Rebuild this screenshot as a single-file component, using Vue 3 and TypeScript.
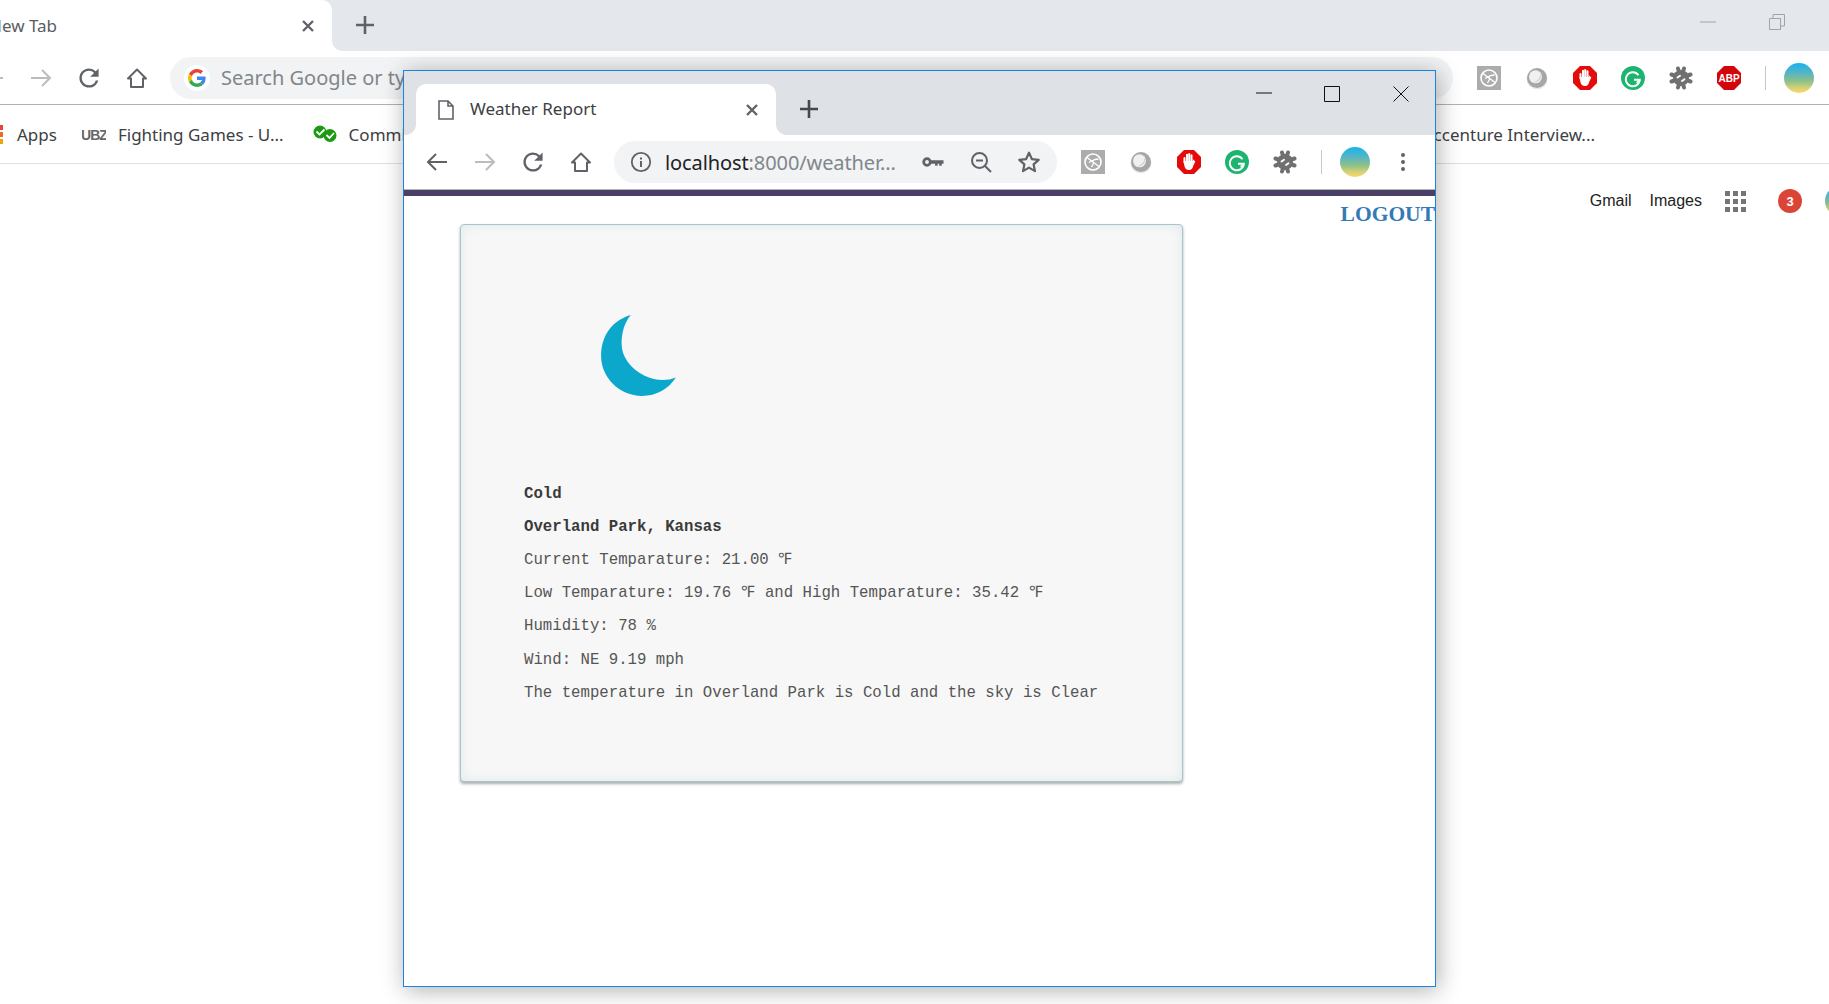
<template>
  <div class="desktop">
    <!-- shared icons -->
    <svg class="sprite" aria-hidden="true">
      <defs>
        <symbol id="back" viewBox="0 0 24 24"><path d="M22 12H3.500M11 4 3 12l8 8" fill="none" stroke="currentColor" stroke-width="2" /></symbol>
        <symbol id="forward" viewBox="0 0 24 24"><path d="M2 12h18.500M13 4l8 8-8 8" fill="none" stroke="currentColor" stroke-width="2" /></symbol>
        <symbol id="reload" viewBox="2 2 20 20"><path fill="currentColor" d="M17.650 6.350A7.960 7.960 0 0 0 12 4c-4.420 0-7.990 3.580-7.990 8s3.570 8 7.990 8c3.730 0 6.840-2.550 7.730-6h-2.080A5.990 5.990 0 0 1 12 18c-3.310 0-6-2.690-6-6s2.690-6 6-6c1.660 0 3.140.690 4.220 1.780L13 11h7V4l-2.350 2.350z" /></symbol>
        <symbol id="home" viewBox="0 0 24 24"><path d="M12 3.500 21 12.500h-3V21H6v-8.500H3z" fill="none" stroke="currentColor" stroke-width="2" stroke-linejoin="round" /></symbol>
        <symbol id="info" viewBox="0 0 24 24"><circle cx="12" cy="12" r="9.200" fill="none" stroke="currentColor" stroke-width="1.800" /><path d="M11 11h2v6h-2zM11 7.500h2v2h-2z" fill="currentColor" /></symbol>
        <symbol id="key" viewBox="0 0 24 24"><circle cx="6" cy="12" r="3.300" fill="none" stroke="currentColor" stroke-width="2.800" /><path d="M9 10.300h13.500v3.400h-1.800v2h-2.500v-2h-1.600v2h-2.500v-2H9z" fill="currentColor" /></symbol>
        <symbol id="zoomout" viewBox="0 0 24 24"><circle cx="10.500" cy="10.500" r="7.500" fill="none" stroke="currentColor" stroke-width="2" /><path d="M16 16l6 6M7 10.500h7" fill="none" stroke="currentColor" stroke-width="2" /></symbol>
        <symbol id="star" viewBox="1 1 22 22"><path d="m12 3.500 2.600 5.800 6.300.7-4.700 4.200 1.300 6.200-5.500-3.200-5.500 3.200 1.300-6.200L3.100 10l6.300-.7z" fill="none" stroke="currentColor" stroke-width="2" stroke-linejoin="round" /></symbol>
        <symbol id="page" viewBox="0 0 16 20"><path d="M1 1h9l5 5v13H1zM10 1v5h5" fill="#fff" stroke="#5f6368" stroke-width="1.600" /></symbol>
        <symbol id="ext-runner" viewBox="0 0 24 24">
          <rect width="24" height="24" fill="#acacac" />
          <circle cx="12" cy="12" r="8" fill="none" stroke="#fff" stroke-width="1.600" />
          <path d="M6 7.500 18 16.500M8 12.500l6-3 3.500-.5M12 10.500l.5 3-2 3.500" fill="none" stroke="#fff" stroke-width="1.300" />
        </symbol>
        <symbol id="ext-orb" viewBox="0 0 24 24">
          <circle cx="12" cy="12.800" r="10.500" fill="#e8e8e8" />
          <circle cx="12" cy="12" r="10" fill="#a6a6a6" />
          <circle cx="10.500" cy="10.800" r="6.500" fill="#f0f0f0" />
          <path d="M15.500 7.500a6.500 6.500 0 0 1-8 8.500 8 8 0 0 0 8-8.500z" fill="#c9c9c9" />
        </symbol>
        <symbol id="ext-stop" viewBox="0 0 24 24">
          <path d="M7 0h10l7 7v10l-7 7H7l-7-7V7z" fill="#e40b0b" />
          <path d="M7.500 12.500V8M10 11V4.800M12.200 11V4M14.500 11V5.200" stroke="#fff" stroke-width="2" stroke-linecap="round" />
          <path d="M6.600 11h9.100V9l2.600 2.500c-.6 2-1.800 3-2.300 5-.5 2.300-1.700 3.500-3.700 3.500-3 0-4.300-1.500-5-4.500z" fill="#fff" />
        </symbol>
        <symbol id="ext-gram" viewBox="0 0 24 24">
          <circle cx="12" cy="12" r="12" fill="#1cb46f" />
          <path d="M17.500 9.200A7 7 0 1 0 18.800 13.700H13" fill="none" stroke="#fff" stroke-width="1.900" />
          <path d="m15.500 16.800 3.600-3.100" stroke="#fff" stroke-width="1.500" />
        </symbol>
        <symbol id="ext-bug" viewBox="0 0 24 24">
          <g stroke="#707070" stroke-width="4" stroke-linecap="round">
            <path d="M9 2.500 15 21.500M15 2.500 9 21.500M2.500 8.500l19 7M21.500 8.500l-19 7" />
          </g>
          <circle cx="12" cy="12" r="8" fill="#707070" />
          <path d="M8.500 11.500l2.500-1.800M13 15l2.500-1.800" stroke="#fff" stroke-width="1.900" stroke-linecap="round" />
        </symbol>
        <symbol id="ext-abp" viewBox="0 0 24 24">
          <path d="M7 0h10l7 7v10l-7 7H7l-7-7V7z" fill="#d3050c" />
          <text x="12" y="16" text-anchor="middle" class="abp-text">ABP</text>
        </symbol>
        <symbol id="google-g" viewBox="0 0 48 48">
          <path fill="#EA4335" d="M24 9.500c3.540 0 6.710 1.220 9.210 3.600l6.850-6.850C35.900 2.380 30.470 0 24 0 14.620 0 6.510 5.380 2.560 13.220l7.980 6.190C12.430 13.720 17.740 9.500 24 9.500z" />
          <path fill="#4285F4" d="M46.980 24.550c0-1.570-.150-3.090-.380-4.550H24v9.020h12.940c-.580 2.960-2.260 5.480-4.780 7.180l7.730 6c4.510-4.180 7.090-10.360 7.090-17.650z" />
          <path fill="#FBBC05" d="M10.530 28.590c-.480-1.450-.760-2.990-.760-4.590s.270-3.140.760-4.590l-7.980-6.190C.920 16.460 0 20.120 0 24c0 3.880.920 7.540 2.560 10.780l7.970-6.190z" />
          <path fill="#34A853" d="M24 48c6.480 0 11.930-2.130 15.890-5.810l-7.730-6c-2.150 1.450-4.920 2.300-8.160 2.300-6.260 0-11.570-4.220-13.470-9.910l-7.980 6.190C6.510 42.620 14.620 48 24 48z" />
        </symbol>
      </defs>
    </svg>

    <!-- window in the back -->
    <div class="back-window">
      <div class="strip back-strip">
        <div class="tab back-tab">
          <span class="back-tab-title">New Tab</span>
          <svg class="tab-x" viewBox="0 0 12 12"><path d="M1 1l10 10M11 1 1 11" /></svg>
        </div>
        <svg class="plus back-plus" viewBox="0 0 18 18"><path d="M9 0v18M0 9h18" /></svg>
        <div class="win-controls back-controls">
          <div class="win-btn"><svg width="16" height="2"><path d="M0 1h16" stroke="#a0a4a8" /></svg></div>
          <div class="win-btn"><svg width="16" height="16"><path d="M.5 4.500h11v11H.5zM4 4.500V.5h11.500V12H12" fill="none" stroke="#a0a4a8" /></svg></div>
        </div>
      </div>

      <div class="toolbar back-toolbar">
        <svg class="tb-icon dim"><use href="#back" /></svg>
        <svg class="tb-icon dim"><use href="#forward" /></svg>
        <svg class="tb-icon"><use href="#reload" /></svg>
        <svg class="tb-icon"><use href="#home" /></svg>
        <div class="omnibox back-omnibox">
          <span class="g-chip"><svg width="18" height="18"><use href="#google-g" /></svg></span>
          <span class="omni-hint">Search Google or type a URL</span>
        </div>
        <div class="ext-list back-exts">
          <svg v-for="e in backExts" :key="e" class="ext"><use :href="`#${e}`" /></svg>
        </div>
        <div class="divider"></div>
        <div class="avatar"></div>
      </div>

      <div class="bookmarks">
        <div class="apps-grid"><i></i><i></i><i></i></div>
        <span class="bm apps">Apps</span>
        <svg class="bm-icon fg-icon" viewBox="0 0 24 16"><text x="12" y="13.500" text-anchor="middle" class="fg-text">UBZ</text></svg>
        <span class="bm">Fighting Games - U...</span>
        <svg class="bm-icon comm-icon" viewBox="0 0 24 18">
          <circle cx="7" cy="7" r="6.500" fill="#1c9a12" /><circle cx="17" cy="10.500" r="6.500" fill="#1c9a12" />
          <path d="M3.500 6.500l3 3 5-5M13.500 10l3 3 4.500-5" fill="none" stroke="#fff" stroke-width="1.800" />
        </svg>
        <span class="bm">Commits</span>
        <span class="bm last">Accenture Interview...</span>
      </div>

      <div class="google-links">
        <span class="g-link">Gmail</span>
        <span class="g-link images">Images</span>
        <div class="dots"><i v-for="n in 9" :key="n"></i></div>
        <span class="badge">3</span>
        <div class="avatar small"></div>
      </div>
    </div>

    <!-- window in front, free on the desktop -->
    <div class="front-window">
      <div class="strip front-strip">
        <div class="tab front-tab">
          <svg class="page-icon"><use href="#page" /></svg>
          <span class="tab-title">Weather Report</span>
          <svg class="tab-x" viewBox="0 0 12 12"><path d="M1 1l10 10M11 1 1 11" /></svg>
        </div>
        <svg class="plus front-plus" viewBox="0 0 18 18"><path d="M9 0v18M0 9h18" /></svg>
        <div class="win-controls front-controls">
          <div class="win-btn"><svg width="16" height="2"><path d="M0 1h16" stroke="#111" /></svg></div>
          <div class="win-btn"><svg width="16" height="16"><path d="M.5.5h15v15H.5z" fill="none" stroke="#111" /></svg></div>
          <div class="win-btn"><svg width="16" height="16"><path d="M.5.5l15 15M15.500.5l-15 15" fill="none" stroke="#111" /></svg></div>
        </div>
      </div>

      <div class="toolbar front-toolbar">
        <svg class="tb-icon"><use href="#back" /></svg>
        <svg class="tb-icon dim"><use href="#forward" /></svg>
        <svg class="tb-icon"><use href="#reload" /></svg>
        <svg class="tb-icon"><use href="#home" /></svg>
        <div class="omnibox front-omnibox">
          <svg class="info"><use href="#info" /></svg>
          <span class="url">localhost<span class="url-rest">:8000/weather...</span></span>
          <div class="omni-actions">
            <svg class="tb-icon"><use href="#key" /></svg>
            <svg class="tb-icon"><use href="#zoomout" /></svg>
            <svg class="tb-icon"><use href="#star" /></svg>
          </div>
        </div>
        <div class="ext-list front-exts">
          <svg v-for="e in frontExts" :key="e" class="ext"><use :href="`#${e}`" /></svg>
        </div>
        <div class="divider"></div>
        <div class="avatar"></div>
        <svg class="menu" viewBox="0 0 4 18"><circle cx="2" cy="2" r="2" /><circle cx="2" cy="9" r="2" /><circle cx="2" cy="16" r="2" /></svg>
      </div>

      <div class="app-nav"></div>
      <div class="logout-row"><a class="logout">LOGOUT</a></div>

      <div class="weather-card">
        <svg class="moon" viewBox="0 0 78 83">
          <path d="M31 2C13 7 2 22 2 42c0 21 18 39 40 39 14 0 26-7 33-18-10 4-20 3-31-2C30 54 22 42 22 30c0-11 3-21 9-28z" fill="#0ba8cc" />
        </svg>
        <p v-for="line in lines" :key="line.text" class="line" :class="{ strong: line.strong }">
          <template v-for="(part, i) in line.text.split('℉')" :key="i"><span v-if="i > 0" class="deg">℉</span>{{ part }}</template>
        </p>
      </div>
    </div>
  </div>
</template>

<script setup lang="ts">
const frontExts = ['ext-runner', 'ext-orb', 'ext-stop', 'ext-gram', 'ext-bug']
const backExts = [...frontExts, 'ext-abp']

interface Line {
  text: string
  strong?: boolean
}

const lines: Line[] = [
  { text: 'Cold', strong: true },
  { text: 'Overland Park, Kansas', strong: true },
  { text: 'Current Temparature: 21.00 ℉' },
  { text: 'Low Temparature: 19.76 ℉ and High Temparature: 35.42 ℉' },
  { text: 'Humidity: 78 %' },
  { text: 'Wind: NE 9.19 mph' },
  { text: 'The temperature in Overland Park is Cold and the sky is Clear' },
]
</script>

<style>
html,
body {
  margin: 0;
  overflow: hidden;
  background: #fff;
}
</style>

<style scoped>
.desktop {
  position: relative;
  width: 1829px;
  height: 1004px;
  overflow: hidden;
  background: #fff;
  font-family: "Noto Sans", "Open Sans", sans-serif;
  color: #3c4043;
}

.sprite {
  position: absolute;
  width: 0;
  height: 0;
}

.abp-text {
  font: 700 10px "Liberation Sans", sans-serif;
  fill: #fff;
}

.fg-text {
  font: 700 14px "Liberation Sans", sans-serif;
  fill: #666;
  letter-spacing: -1px;
}

/* tab strips */
.strip {
  display: flex;
  background: #e4e7eb;
}

.back-strip {
  height: 51px;
}

.front-strip {
  height: 64px;
  padding-left: 12px;
  background: #dee1e6;
}

.tab {
  position: relative;
  display: flex;
  align-items: center;
  background: #fff;
  box-sizing: border-box;
  border-top-right-radius: 10px;
}

.tab::after {
  content: "";
  position: absolute;
  right: -10px;
  bottom: 0;
  width: 10px;
  height: 10px;
  background: radial-gradient(circle at 100% 0, transparent 9.5px, #fff 10px);
}

.back-tab {
  width: 332px;
  height: 51px;
  padding-right: 18px;
}

.back-tab-title {
  margin-left: -11px;
  font-size: 17px;
  line-height: 48px;
  color: #5a5d61;
}

.front-tab {
  width: 360px;
  height: 51px;
  margin-top: 13px;
  padding: 0 18px 0 22px;
  border-top-left-radius: 10px;
}

.front-tab::before {
  content: "";
  position: absolute;
  left: -10px;
  bottom: 0;
  width: 10px;
  height: 10px;
  background: radial-gradient(circle at 0 0, transparent 9.5px, #fff 10px);
}

.page-icon {
  width: 16px;
  height: 20px;
}

.tab-title {
  margin-left: 16px;
  margin-top: -2px;
  font-size: 17px;
  color: #3c4043;
}

.tab-x {
  width: 12px;
  height: 12px;
  margin-left: auto;
  fill: none;
  stroke: #5f6368;
  stroke-width: 2.400;
}

.plus {
  width: 18px;
  height: 18px;
  fill: none;
  stroke: #5f6368;
  stroke-width: 2.600;
}

.back-plus {
  margin: 16px 0 0 24px;
}

.front-plus {
  margin: 29px 0 0 24px;
  stroke: #45484c;
}

.win-controls {
  display: flex;
  margin-left: auto;
}

.back-controls {
  padding-right: 18px;
}

.win-btn {
  display: flex;
  align-items: center;
  justify-content: center;
  width: 69px;
  height: 45px;
  box-sizing: border-box;
}

.back-controls .win-btn {
  height: 43px;
}

.front-controls .win-btn:first-child {
  padding: 0 0 2px 3px;
}

/* toolbars */
.toolbar {
  display: flex;
  align-items: center;
  height: 54px;
  background: #fff;
  box-sizing: border-box;
}

.back-toolbar {
  margin-left: -31px;
  width: 1860px;
  border-bottom: 1px solid #b2b2b2;
}

.front-toolbar {
  padding-left: 9px;
  border-bottom: 1px solid #b2b4b8;
  height: 55px;
}

.tb-icon {
  flex: none;
  width: 24px;
  height: 24px;
  padding: 0 12px;
  color: #5f6368;
}

.tb-icon.dim {
  color: #bcbcbc;
}

.omnibox {
  display: flex;
  align-items: center;
  flex: none;
  height: 42px;
  margin-left: 9px;
  border-radius: 21px;
  background: #f1f3f4;
}

.back-omnibox {
  width: 1283px;
  box-sizing: border-box;
  padding-left: 14px;
  overflow: hidden;
}

.front-omnibox {
  width: 443px;
  padding-left: 15px;
  box-sizing: border-box;
}

.g-chip {
  display: flex;
  align-items: center;
  justify-content: center;
  width: 26px;
  height: 26px;
  border-radius: 50%;
  background: #fff;
}

.omni-hint {
  margin-left: 11px;
  font-size: 20px;
  color: #80868b;
  white-space: nowrap;
}

.info {
  width: 24px;
  height: 24px;
  color: #5f6368;
}

.url {
  margin-left: 12px;
  font-size: 20px;
  letter-spacing: -0.1px;
  color: #202124;
  white-space: nowrap;
}

.url-rest {
  color: #80868b;
}

.omni-actions {
  display: flex;
  margin-left: auto;
  padding-right: 4px;
}

.ext-list {
  display: flex;
}

.back-exts {
  margin-left: 12px;
}

.front-exts {
  margin-left: 12px;
}

.ext {
  width: 24px;
  height: 24px;
  padding: 0 12px;
}

.divider {
  flex: none;
  width: 1px;
  height: 24px;
  margin: 0 18px 0 12px;
  background: #c8c8c8;
}

.avatar {
  flex: none;
  width: 30px;
  height: 30px;
  border-radius: 50%;
  background: linear-gradient(180deg, #16b4f0 0%, #5ab5c0 35%, #8cc08a 60%, #d9d274 85%, #fdd964 100%);
}

.menu {
  width: 4px;
  height: 18px;
  margin-left: 31px;
  fill: #5f6368;
}

/* bookmarks row of the back window */
.bookmarks {
  display: flex;
  align-items: center;
  height: 59px;
  padding-right: 234px;
  border-bottom: 1px solid #e0e0e0;
  box-sizing: border-box;
  font-size: 17px;
  color: #3c4043;
}

.apps-grid {
  display: flex;
  flex-direction: column;
  gap: 2px;
  width: 3px;
}

.apps-grid i {
  display: block;
  height: 5px;
  background: #f2a10f;
}

.apps-grid i:first-child {
  background: #ea4335;
}

.apps-grid i:nth-child(2) {
  background: #ef6a24;
}

.bm {
  white-space: nowrap;
}

.apps {
  margin-left: 14px;
}

.bm-icon {
  flex: none;
  width: 24px;
}

.fg-icon {
  height: 16px;
  margin: 0 12px 0 25px;
}

.comm-icon {
  height: 18px;
  margin: 0 12px 0 29px;
}

.last {
  margin-left: auto;
}

/* page of the back window */
.google-links {
  display: flex;
  align-items: center;
  width: 1855px;
  height: 48px;
  margin-top: 13px;
  justify-content: flex-end;
  font-family: "Liberation Sans", Arial, sans-serif;
  font-size: 16px;
  color: #222;
}

.images {
  margin-left: 18px;
}

.dots {
  display: grid;
  grid-template-columns: repeat(3, 5px);
  gap: 3px;
  margin-left: 23px;
}

.dots i {
  display: block;
  width: 5px;
  height: 5px;
  background: #757575;
}

.badge {
  display: flex;
  align-items: center;
  justify-content: center;
  width: 24px;
  height: 24px;
  margin-left: 32px;
  border-radius: 50%;
  background: #db4437;
  color: #fff;
  font-size: 13px;
  font-weight: 700;
}

.avatar.small {
  margin-left: 23px;
}

/* front window */
.front-window {
  position: absolute;
  left: 403px;
  top: 70px;
  width: 1033px;
  height: 917px;
  box-sizing: border-box;
  border: 1px solid #1b83db;
  background: #fff;
  overflow: hidden;
}

.desktop::after {
  content: "";
  position: absolute;
  left: 403px;
  top: 70px;
  width: 1033px;
  height: 917px;
  box-shadow: 2px 3px 22px rgba(0, 0, 0, 0.32);
  pointer-events: none;
}

.app-nav {
  height: 6px;
  background: #4b3f68;
}

.logout-row {
  display: flex;
  justify-content: flex-end;
  align-items: flex-start;
  height: 28px;
}

.logout {
  padding-top: 6px;
  font-family: "Liberation Serif", serif;
  font-size: 21.5px;
  font-weight: 700;
  line-height: 24px;
  color: #337ab7;
}

.weather-card {
  width: 723px;
  height: 558px;
  margin-left: 56px;
  padding: 88px 0 0 63px;
  box-sizing: border-box;
  border: 1px solid #a3c6cf;
  border-radius: 4px;
  background: #f7f7f7;
  box-shadow: inset 0 0 12px rgba(120, 160, 170, 0.16), 0 2px 3px rgba(0, 0, 0, 0.32);
  font-family: "Liberation Mono", monospace;
  font-size: 15.7px;
  color: #555;
}

.moon {
  display: block;
  width: 80px;
  height: 85px;
  margin: 0 0 79.5px 75px;
}

.line {
  margin: 0;
  line-height: 33.2px;
  white-space: pre;
}

.line.strong {
  font-weight: 700;
  color: #3a3a3a;
}

.deg {
  display: inline-block;
  width: 15px;
}
</style>
